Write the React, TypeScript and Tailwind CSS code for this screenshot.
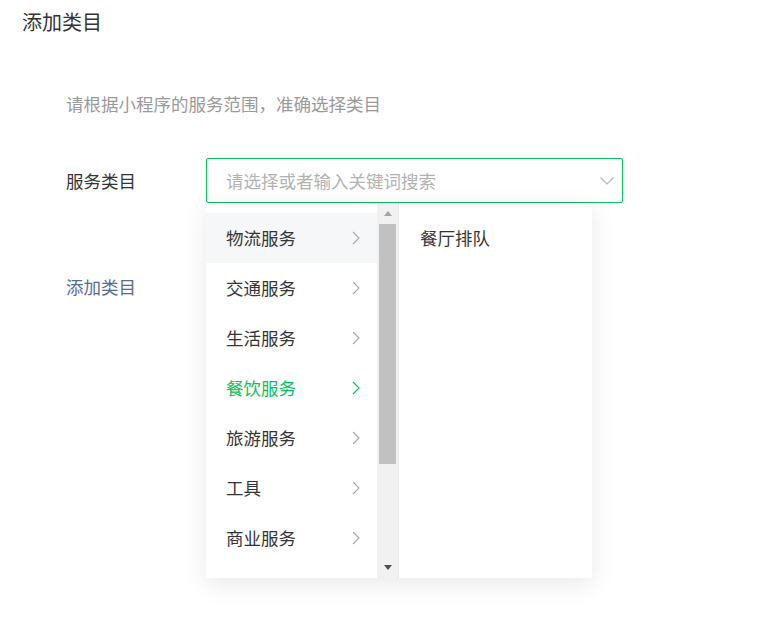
import { useState } from 'react'

const categories = ['物流服务', '交通服务', '生活服务', '餐饮服务', '旅游服务', '工具', '商业服务']

function Chevron({ className }: { className?: string }) {
  return (
    <svg width="8" height="14" viewBox="0 0 8 14" fill="none" className={className}>
      <path d="M1 1l6 6-6 6" stroke="currentColor" strokeWidth="1.1" />
    </svg>
  )
}

export default function App() {
  const [active] = useState(3)
  const [hover] = useState(0)

  return (
    <div className="w-[759px] h-[635px] bg-white text-[#353535] font-['Noto_Sans_CJK_SC',sans-serif]">
      <div className="pl-[22px] pt-[10px] h-[34px] text-[20px] leading-[24px]">添加类目</div>

      <div className="pl-[66px]">
        <p className="mt-[58px] h-[24px] text-[17.5px] leading-[24px] text-[#9a9a9a]">
          请根据小程序的服务范围，准确选择类目
        </p>

        <div className="mt-[42px] flex items-center">
          <label className="w-[140px] text-[17.5px] leading-[24px]">服务类目</label>
          <div className="relative">
            <div className="w-[417px] h-[45px] border border-[#07c160] rounded-[2px] flex items-center pl-[19px] pr-[8px]">
              <span className="flex-1 text-[17.5px] leading-[24px] text-[#b2b2b2]">请选择或者输入关键词搜索</span>
              <svg width="14" height="8" viewBox="0 0 14 8" fill="none">
                <path d="M0.5 0.5l6.5 6.5 6.5-6.5" stroke="#b2b2b2" strokeWidth="1.1" />
              </svg>
            </div>

            <div className="absolute left-0 top-[45px] z-10 w-[386px] h-[375px] flex bg-white shadow-[0_6px_24px_rgba(0,0,0,0.09)]">
              <ul className="w-[171px] pt-[10px] overflow-hidden">
                {categories.map((c, i) => (
                  <li
                    key={c}
                    className={
                      'h-[50px] flex items-center justify-between pl-[20px] pr-[17px] text-[17.5px] ' +
                      (i === hover ? 'bg-[#f6f7f9] ' : '') +
                      (i === active ? 'text-[#07c160]' : 'text-[#353535]')
                    }
                  >
                    <span>{c}</span>
                    <Chevron className={i === active ? 'text-[#07c160]' : 'text-[#a8a8a8]'} />
                  </li>
                ))}
              </ul>

              <div className="w-[22px] bg-[#f1f1f1] border-r border-[#e8e8e8] flex flex-col items-center">
                <div className="h-[21px] flex items-center justify-center">
                  <div className="w-0 h-0 border-l-[4px] border-r-[4px] border-b-[5px] border-l-transparent border-r-transparent border-b-[#a3a3a3]" />
                </div>
                <div className="w-[17px] h-[240px] bg-[#c1c1c1] -ml-[1px]" />
                <div className="flex-1" />
                <div className="h-[21px] flex items-center justify-center">
                  <div className="w-0 h-0 border-l-[4px] border-r-[4px] border-t-[5px] border-l-transparent border-r-transparent border-t-[#505050]" />
                </div>
              </div>

              <ul className="flex-1 pt-[10px] pl-[21px]">
                <li className="h-[50px] flex items-center text-[17.5px] text-[#353535]">餐厅排队</li>
              </ul>
            </div>
          </div>
        </div>

        <a className="block mt-[72px] h-[24px] text-[17.5px] leading-[24px] text-[#576b95]">添加类目</a>
      </div>
    </div>
  )
}
